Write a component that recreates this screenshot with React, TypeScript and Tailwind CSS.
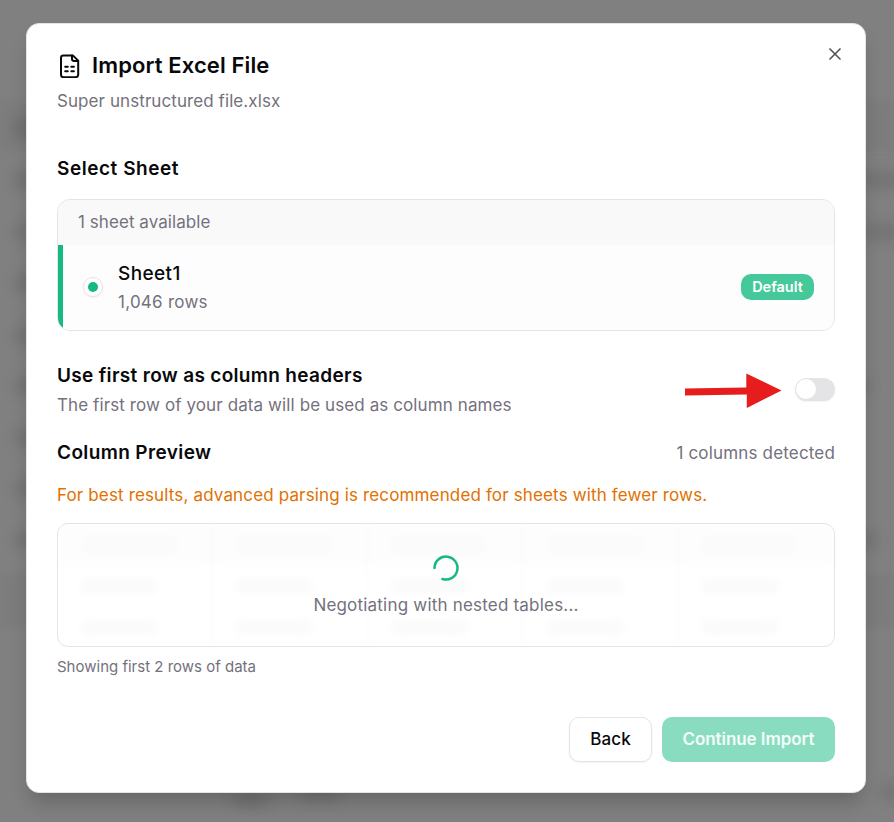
import { X } from "lucide-react";

const COLUMNS = [0, 1, 2, 3, 4];

// Blurred page rows that peek out from behind the overlay
const BACKDROP_MARKS = [
  "left-[12px] top-[118px] h-5 w-9",
  "left-[12px] top-[172px] h-4 w-7",
  "left-[14px] top-[224px] h-4 w-7",
  "left-[14px] top-[275px] h-4 w-7",
  "left-[14px] top-[328px] h-4 w-7",
  "left-[14px] top-[378px] h-4 w-7",
  "left-[14px] top-[430px] h-4 w-7",
  "left-[14px] top-[481px] h-4 w-7",
  "left-[14px] top-[532px] h-4 w-7",
  "left-[860px] top-[172px] h-4 w-12",
  "left-[860px] top-[224px] h-4 w-12",
  "left-[846px] top-[378px] h-4 w-6",
  "left-[854px] top-[532px] h-4 w-6",
  "left-[232px] top-[791px] h-4 w-9",
  "left-[300px] top-[784px] h-4 w-10",
  "left-[880px] top-[784px] h-4 w-8",
];

function SheetIcon() {
  return (
    <svg
      className="size-[26px] shrink-0"
      viewBox="0 0 26 26"
      fill="none"
      stroke="currentColor"
      strokeWidth="2"
      strokeLinecap="round"
      strokeLinejoin="round"
    >
      <path d="M15.8 3.4H6.4A2.4 2.4 0 0 0 4 5.8v17a2.4 2.4 0 0 0 2.4 2.4h12.4a2.4 2.4 0 0 0 2.4-2.4V8.6Z" />
      <path d="M15 3.6v3.2a2.2 2.2 0 0 0 2.2 2.2h3.6" />
      <path d="M8.2 14.8h2.6M14.3 14.8h2.6M8.2 19.2h2.6M14.3 19.2h2.6" />
    </svg>
  );
}

function Backdrop() {
  return (
    <div className="absolute inset-0 overflow-hidden">
      <div className="absolute inset-x-0 top-[100px] h-[52px] bg-[#7c7c7c] blur-[3px]" />
      <div className="absolute inset-x-0 top-[574px] h-[54px] bg-[#7c7c7c] blur-[3px]" />
      {BACKDROP_MARKS.map((mark) => (
        <div key={mark} className={`absolute rounded-full bg-black/10 blur-[7px] ${mark}`} />
      ))}
    </div>
  );
}

function SheetPicker() {
  return (
    <div className="mt-4 h-[132px] overflow-hidden rounded-[13px] border border-[#e4e4e7]">
      <div className="flex h-[45px] items-center bg-[#f9f9f9] pl-5 text-[17px] text-[#74717d]">
        <span className="tracking-[0.06px]">1 sheet available</span>
      </div>
      <div className="flex h-[85px] items-center border-l-[5px] border-[#16b981] bg-[#fdfdfd] px-5 pb-0.5">
        <div className="flex size-5 items-center justify-center rounded-full border border-[#e4e4e7] bg-white shadow-xs">
          <div className="size-2.5 rounded-full bg-[#16b981]" />
        </div>
        <div className="ml-[15px] flex-1 pt-[3px]">
          <div className="text-[19px] leading-7 font-medium tracking-[0.4px]">Sheet1</div>
          <div className="text-[17px] leading-7 tracking-[0.25px] text-[#74717d]">1,046 rows</div>
        </div>
        <div className="flex h-[26px] w-[73px] items-center justify-center rounded-[10px] bg-[#45c99a] text-[14.5px] font-semibold text-white">
          Default
        </div>
      </div>
    </div>
  );
}

function PreviewLoader() {
  return (
    <div className="relative mt-3.5 h-[124px] overflow-hidden rounded-[11px] border border-[#e4e4e7]">
      <div className="grid h-full grid-cols-5 blur-[3px]">
        {COLUMNS.map((column) => (
          <div key={column} className="border-r-2 border-[#fafafa] last:border-r-0">
            <div className="flex h-[41px] items-center bg-[#fdfdfd] pl-[22px]">
              <div className="h-5 w-[98px] rounded-full bg-[#fbfbfb]" />
            </div>
            <div className="flex h-[41px] items-center pl-[22px]">
              <div className="h-4 w-[78px] rounded-full bg-[#fbfbfb]" />
            </div>
            <div className="flex h-[41px] items-center pl-[22px]">
              <div className="h-4 w-[78px] rounded-full bg-[#fbfbfb]" />
            </div>
          </div>
        ))}
      </div>
      <div className="absolute inset-0 flex flex-col items-center pt-[29px]">
        <svg className="size-[30px]" viewBox="0 0 30 30" fill="none">
          <path
            d="M3.5 15A11.5 11.5 0 1 1 11.4 26"
            stroke="#16b981"
            strokeWidth="2.5"
            strokeLinecap="round"
          />
        </svg>
        <span className="mt-2.5 text-[17px] leading-6 tracking-[0.2px] text-[#74717d]">
          Negotiating with nested tables...
        </span>
      </div>
    </div>
  );
}

export default function App() {
  return (
    <div className="relative h-[822px] w-[894px] overflow-hidden bg-[#808080] pt-[23px] pl-[26px] font-['Inter',sans-serif] text-[#09090b]">
      <Backdrop />
      <main className="relative h-[770px] w-[840px] rounded-[13px] border border-[#e4e4e7] bg-white px-[30px] pt-[27px] shadow-[0_13px_20px_-4px_rgba(0,0,0,0.2)]">
        <button className="absolute top-[20px] right-[20px] text-[#525254]" aria-label="Close">
          <X className="size-5" strokeWidth={2} />
        </button>

        <header>
          <div className="flex h-7 items-center gap-[9px]">
            <SheetIcon />
            <h1 className="text-[22px] font-semibold tracking-[0.12px] whitespace-nowrap">Import Excel File</h1>
          </div>
          <p className="mt-2 text-[17px] leading-7 tracking-[0.08px] text-[#74717d]">
            <span>Super unstructured file.xlsx</span>
          </p>
        </header>

        <section className="mt-10">
          <h2 className="text-[19px] leading-7 font-semibold tracking-[0.55px]">Select Sheet</h2>
          <SheetPicker />
        </section>

        <section className="mt-[31px] flex items-center">
          <div className="flex-1">
            <h2 className="text-[19px] leading-7 font-semibold tracking-[0.33px]">
              <span>Use first row as column headers</span>
            </h2>
            <p className="mt-px text-[17px] leading-7 tracking-[0.1px] text-[#74717d]">
              <span>The first row of your data will be used as column names</span>
            </p>
          </div>
          <svg className="mr-[13px] h-[36px] w-[98px]" viewBox="0 0 98 36" fill="#e71c1d">
            <path d="M1 15.5 62.3 14.5V.5L97.5 17.5 62.8 35V21.5L1 22.5Z" />
          </svg>
          <div className="mb-[3px] flex h-[23px] w-10 items-center rounded-full bg-[#e4e4e7] pl-px shadow-xs">
            <div className="size-5 rounded-full bg-white" />
          </div>
        </section>

        <section className="mt-5">
          <div className="flex h-7 items-center justify-between">
            <h2 className="text-[19px] font-semibold tracking-[0.38px]">Column Preview</h2>
            <span className="pt-0.5 text-[17px] tracking-[0.17px] text-[#74717d]">1 columns detected</span>
          </div>
          <p className="mt-3.5 text-[17px] leading-7 tracking-[0.145px] text-[#e17100]">
            <span>For best results, advanced parsing is recommended for sheets with fewer rows.</span>
          </p>
          <PreviewLoader />
          <p className="mt-2 text-[15px] leading-6 text-[#74717d]">
            <span>Showing first 2 rows of data</span>
          </p>
        </section>

        <footer className="mt-[38px] flex justify-end gap-2.5">
          <button className="h-[45px] w-[83px] rounded-[10px] border border-[#e4e4e7] bg-white text-[17px] font-medium tracking-[0.1px] shadow-xs">
            Back
          </button>
          <button className="h-[45px] w-[173px] rounded-[10px] bg-[#8adcc0] text-[17px] font-semibold tracking-[-0.05px] text-[#f3fcf9]">
            Continue Import
          </button>
        </footer>
      </main>
    </div>
  );
}
